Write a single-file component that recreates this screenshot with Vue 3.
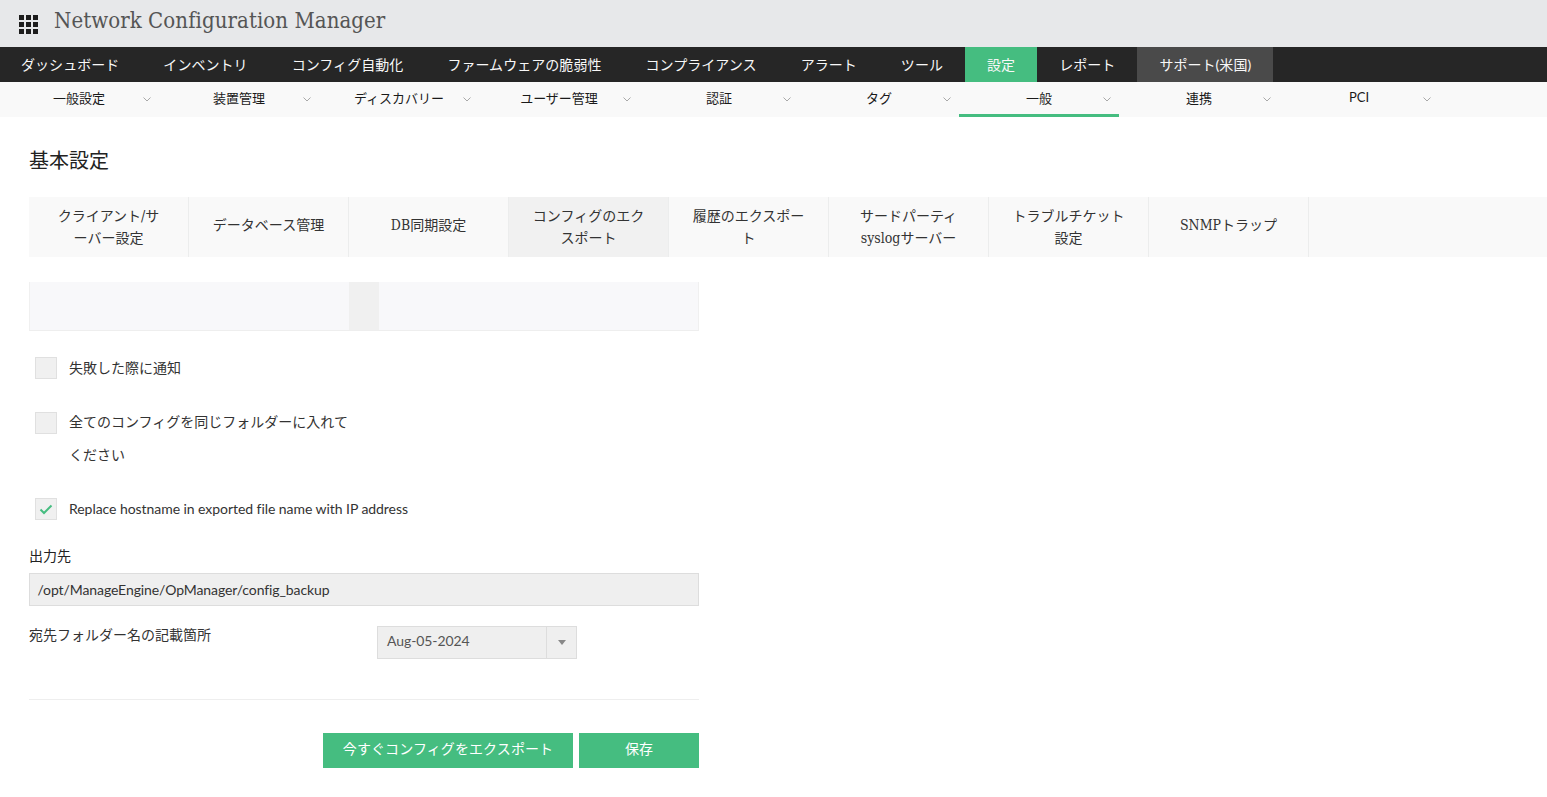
<script setup>
const navItems = [
  { label: 'ダッシュボード' },
  { label: 'インベントリ' },
  { label: 'コンフィグ自動化' },
  { label: 'ファームウェアの脆弱性' },
  { label: 'コンプライアンス' },
  { label: 'アラート' },
  { label: 'ツール' },
  { label: '設定', cls: 'active' },
  { label: 'レポート' },
  { label: 'サポート(米国)', cls: 'support' },
]
const subItems = [
  { label: '一般設定' },
  { label: '装置管理' },
  { label: 'ディスカバリー' },
  { label: 'ユーザー管理' },
  { label: '認証' },
  { label: 'タグ' },
  { label: '一般', active: true },
  { label: '連携' },
  { label: 'PCI', cls: 'pci' },
]
const tabs = [
  { label: 'クライアント/サ\nーバー設定' },
  { label: 'データベース管理', single: true },
  { label: 'DB同期設定', single: true },
  { label: 'コンフィグのエク\nスポート', active: true },
  { label: '履歴のエクスポー\nト' },
  { label: 'サードパーティ\nsyslogサーバー' },
  { label: 'トラブルチケット\n設定' },
  { label: 'SNMPトラップ', single: true },
]
</script>

<template>
  <div class="page">
    <header class="top">
      <span class="grid-icon">
        <i v-for="n in 9" :key="n"></i>
      </span>
      <span class="title">Network Configuration Manager</span>
    </header>

    <nav class="nav">
      <a v-for="item in navItems" :key="item.label" class="nav-item" :class="item.cls">{{ item.label }}</a>
    </nav>

    <nav class="subnav">
      <a v-for="item in subItems" :key="item.label" class="sub-item" :class="[item.cls, { active: item.active }]">
        <span>{{ item.label }}</span>
        <svg class="chev" width="8" height="5" viewBox="0 0 8 5"><path d="M.5.5 4 4 7.500.5" fill="none" stroke="#a8a8a8" stroke-width="1"/></svg>
      </a>
    </nav>

    <main class="content">
      <h1 class="heading">基本設定</h1>

      <div class="tabs">
        <div v-for="t in tabs" :key="t.label" class="tab" :class="{ active: t.active, single: t.single }">
          <span>{{ t.label }}</span>
        </div>
      </div>

      <div class="form">
        <div class="picker">
          <div class="pane"></div>
          <div class="splitter"></div>
          <div class="pane"></div>
        </div>

        <div class="check-row first">
          <span class="box"></span>
          <span class="check-label">失敗した際に通知</span>
        </div>
        <div class="check-row second">
          <span class="box"></span>
          <span class="check-label wrap">全てのコンフィグを同じフォルダーに入れてください</span>
        </div>
        <div class="check-row third">
          <span class="box">
            <svg width="14" height="11" viewBox="0 0 14 11"><path d="M1.500 5.500 5 9 12.500 1.500" fill="none" stroke="#45bd80" stroke-width="2"/></svg>
          </span>
          <span class="check-label latin">Replace hostname in exported file name with IP address</span>
        </div>

        <label class="field-label">出力先</label>
        <div class="path-input">/opt/ManageEngine/OpManager/config_backup</div>

        <div class="folder-row">
          <label class="folder-label">宛先フォルダー名の記載箇所</label>
          <div class="select">
            <span class="select-value">Aug-05-2024</span>
            <span class="select-arrow"><i></i></span>
          </div>
        </div>

        <div class="actions">
          <button class="btn wide">今すぐコンフィグをエクスポート</button>
          <button class="btn narrow">保存</button>
        </div>
      </div>
    </main>
  </div>
</template>

<style>
html, body { margin: 0; background: #fff; overflow: hidden; }
</style>

<style scoped>
.page {
  width: 1547px;
  height: 797px;
  overflow: hidden;
  font-family: Lato, "Noto Sans CJK JP", sans-serif;
  color: #222;
  font-size: 14px;
}
.top {
  height: 47px;
  display: flex;
  align-items: center;
  padding-left: 19px;
  background: #e7e8ea;
  box-sizing: border-box;
}
.grid-icon {
  display: grid;
  grid-template-columns: repeat(3, 5px);
  grid-auto-rows: 5px;
  gap: 2px;
  margin-right: 16px;
  margin-top: 1px;
}
.grid-icon i { background: #1d1d1d; display: block; }
.title {
  font-family: "DejaVu Serif Condensed", "DejaVu Serif", serif;
  font-size: 22px;
  font-weight: 400;
  letter-spacing: .07px;
  color: #555;
  position: relative;
  top: -3px;
}
.nav {
  height: 35px;
  display: flex;
  background: #262626;
  margin-left: -1px;
}
.nav-item {
  padding: 0 22px;
  line-height: 35px;
  color: #f8f8f8;
  font-size: 14px;
  font-weight: 400;
  letter-spacing: .05px;
  white-space: nowrap;
}
.nav-item.active { background: #45bd80; }
.nav-item.support { background: #4a4a4a; min-width: 136px; box-sizing: border-box; padding: 0; text-align: center; }
.subnav {
  height: 35px;
  display: flex;
  background: #f9f9f9;
  margin-left: -1px;
}
.sub-item {
  position: relative;
  box-sizing: border-box;
  width: 160px;
  height: 35px;
  line-height: 32px;
  text-align: center;
  font-size: 13px;
  font-weight: 400;
  color: #1a1a1a;
}
.sub-item.pci { line-height: 30px; }
.sub-item.active { border-bottom: 3px solid #45bd80; }
.chev { position: absolute; left: 144px; top: 15px; }
.content { padding: 0 0 0 29px; }
.heading {
  margin: 0;
  padding-top: 31px;
  font-size: 20px;
  line-height: 24px;
  font-weight: 400;
  color: #222;
}
.tabs {
  margin-top: 25px;
  height: 60px;
  display: flex;
  background: #f9f9f9;
}
.tab {
  box-sizing: border-box;
  width: 160px;
  height: 60px;
  padding: 0 10px;
  border-right: 1px solid #eceded;
  display: flex;
  align-items: center;
  justify-content: center;
  text-align: center;
  white-space: pre-line;
  font-family: "DejaVu Serif Condensed", "Noto Sans CJK JP", serif;
  font-size: 14px;
  line-height: 22px;
  font-weight: 400;
  color: #333;
}
.tab.single { padding-bottom: 4px; }
.tab.active { background: #f1f1f1; }
.form { width: 670px; }
.picker {
  margin-top: 25px;
  height: 48px;
  display: flex;
  background: #f8f8fa;
  border-bottom: 1px solid #eee;
  border-left: 1px solid #f0f0f0;
  border-right: 1px solid #f0f0f0;
}
.pane { flex: 1; }
.splitter { width: 30px; background: #f0f0f0; margin-left: -9px; }
.pane:last-child { flex: 0 0 319px; }
.check-row {
  display: flex;
  padding-left: 6px;
  align-items: flex-start;
}
.first { margin-top: 26px; }
.second { margin-top: 33px; }
.third { margin-top: 27px; }
.box {
  flex: none;
  box-sizing: border-box;
  width: 22px;
  height: 22px;
  background: #f0f0f0;
  border: 1px solid #e0e0e0;
  margin-right: 12px;
  display: flex;
  align-items: center;
  justify-content: center;
}
.check-label {
  line-height: 22px;
  font-size: 14px;
  font-weight: 400;
  color: #333;
}
.check-label.wrap { width: 285px; line-height: 33px; margin-top: -7px; }
.check-label.latin { letter-spacing: -.055px; }
.field-label {
  display: block;
  margin-top: 25px;
  line-height: 22px;
  font-weight: 400;
  color: #222;
}
.path-input {
  box-sizing: border-box;
  margin-top: 6px;
  height: 33px;
  line-height: 31px;
  padding-left: 7.500px;
  background: #efefef;
  border: 1px solid #ddd;
  color: #333;
  font-size: 14px;
  letter-spacing: -.09px;
}
.folder-row {
  display: flex;
  margin-top: 20px;
}
.folder-label {
  width: 348px;
  line-height: 18px;
  font-weight: 400;
  color: #333;
}
.select {
  box-sizing: border-box;
  width: 200px;
  height: 33px;
  border: 1px solid #ddd;
  background: #efefef;
  display: flex;
  line-height: 27px;
  font-size: 14px;
  letter-spacing: -.08px;
  color: #555;
}
.select-value { flex: 1; padding-left: 9px; }
.select-arrow {
  width: 29px;
  border-left: 1px solid #ddd;
  display: flex;
  align-items: center;
  justify-content: center;
}
.select-arrow i {
  width: 0;
  height: 0;
  border-left: 4px solid transparent;
  border-right: 4px solid transparent;
  border-top: 5px solid #888;
}
.actions {
  margin-top: 40px;
  border-top: 1px solid #eee;
  padding-top: 33px;
  display: flex;
  justify-content: flex-end;
  gap: 6px;
}
.btn {
  height: 35px;
  border: 0;
  background: #45bd80;
  color: #fff;
  font-family: inherit;
  font-size: 14px;
  font-weight: 400;
  letter-spacing: .1px;
  padding: 0 0 5px;
}
.wide { width: 250px; }
.narrow { width: 120px; }
</style>
